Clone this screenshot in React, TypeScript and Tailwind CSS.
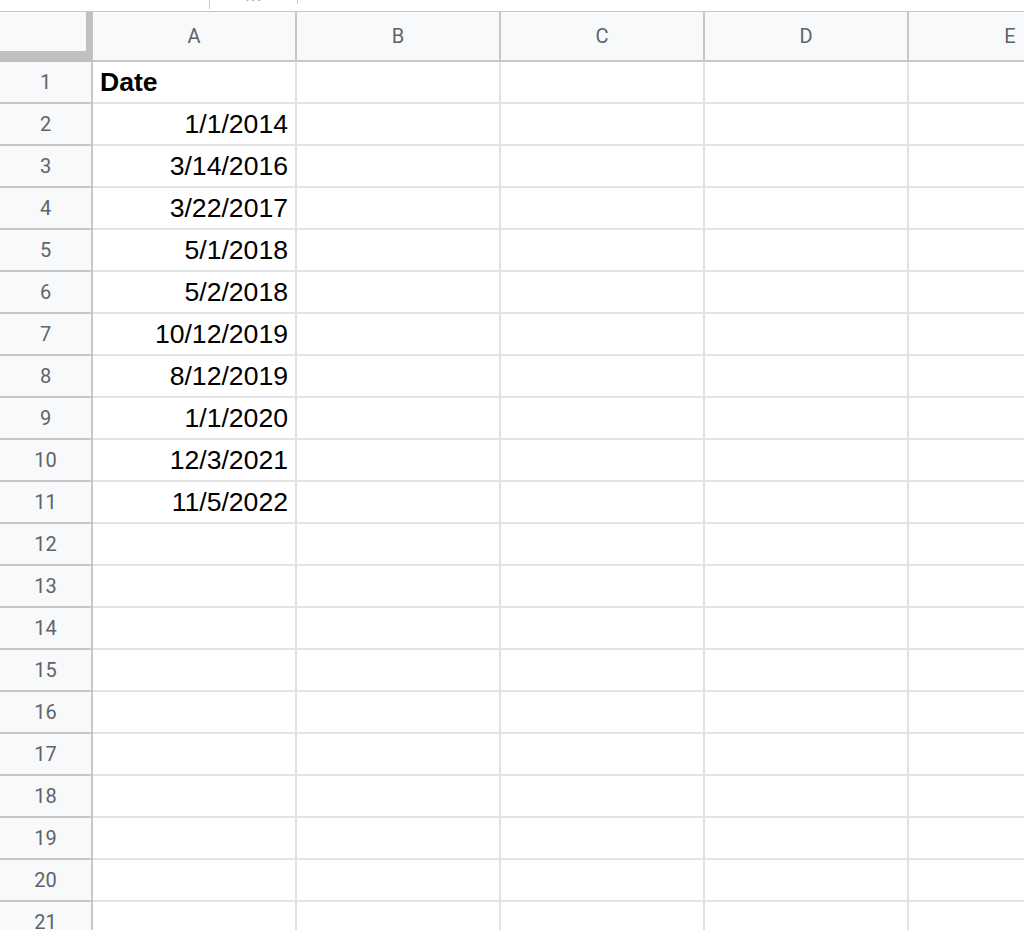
import React from 'react';

const cols = ['A', 'B', 'C', 'D', 'E'];

const cells: Record<number, { text: string; bold?: boolean }> = {
  1: { text: 'Date', bold: true },
  2: { text: '1/1/2014' },
  3: { text: '3/14/2016' },
  4: { text: '3/22/2017' },
  5: { text: '5/1/2018' },
  6: { text: '5/2/2018' },
  7: { text: '10/12/2019' },
  8: { text: '8/12/2019' },
  9: { text: '1/1/2020' },
  10: { text: '12/3/2021' },
  11: { text: '11/5/2022' },
};

const rows = Array.from({ length: 21 }, (_, i) => i + 1);

export default function App() {
  return (
    <div className="h-[930px] w-[1024px] overflow-hidden bg-white">
      {/* remains of the formula bar */}
      <div className="flex h-[11px] items-start overflow-hidden">
        <div className="w-[209px] shrink-0" />
        <div className="h-[9px] w-[1px] shrink-0 bg-[#c8c8c8]" />
        <div className="flex h-[11px] w-[87px] shrink-0 items-end justify-center overflow-hidden">
          <span className="mb-[7px] font-['Roboto',sans-serif] text-[20px] leading-none italic text-[#b0b0b0]">
            fx
          </span>
        </div>
        <div className="h-[4px] w-[1px] shrink-0 bg-[#c8c8c8]" />
      </div>

      {/* column headers */}
      <div className="flex h-[51px] border-t border-[#c7c7c7] bg-[#f8f9fa]">
        <div className="h-full w-[93px] shrink-0 border-r-[7px] border-b-[11px] border-[#c0c0c0] bg-[#f8f9fa]" />
        {cols.map((c) => (
          <div
            key={c}
            className="flex h-full w-[204px] shrink-0 items-center justify-center border-r-2 border-b-2 border-[#c7c7c7] font-['Roboto',sans-serif] text-[20px] text-[#5f6368]"
          >
            {c}
          </div>
        ))}
      </div>

      {rows.map((r) => {
        const cell = cells[r];
        return (
          <div key={r} className="flex h-[42px]">
            <div className="flex h-full w-[93px] shrink-0 items-center justify-center border-r-2 border-b-2 border-[#c7c7c7] bg-[#f8f9fa] font-['Roboto',sans-serif] text-[20px] text-[#5f6368]">
              {r}
            </div>
            {cols.map((c) => (
              <div
                key={c}
                className={`flex h-full w-[204px] shrink-0 items-end border-r-2 border-b-2 border-[#e2e3e3] px-[7px] pb-[6px] font-['Liberation_Sans',Arial,sans-serif] text-[26.6px] leading-none text-black ${
                  cell && cell.bold ? 'justify-start' : 'justify-end'
                }`}
              >
                {c === 'A' && cell ? (
                  <span className={cell.bold ? 'font-bold' : ''}>{cell.text}</span>
                ) : null}
              </div>
            ))}
          </div>
        );
      })}
    </div>
  );
}
